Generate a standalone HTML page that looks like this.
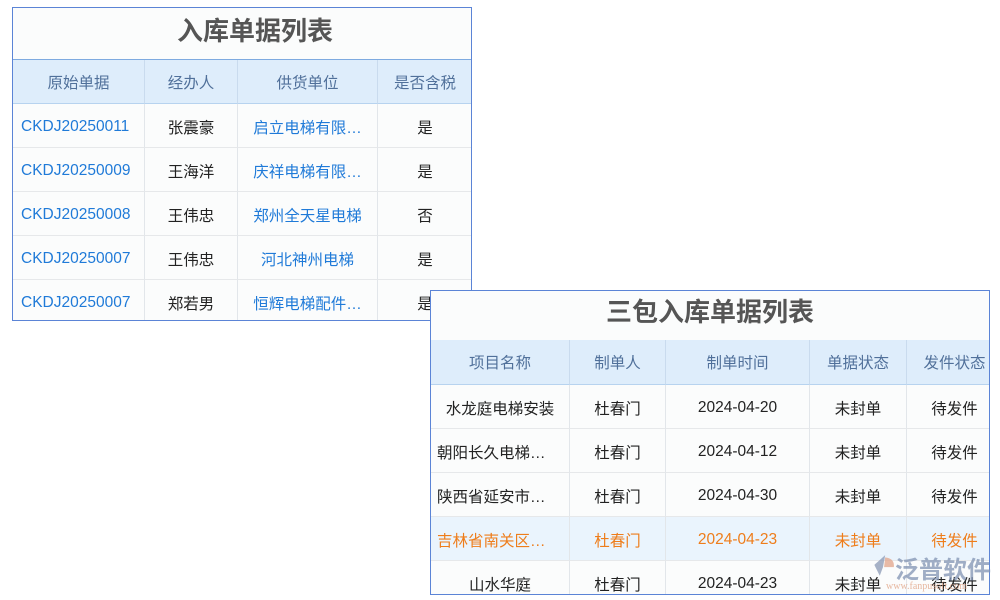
<!DOCTYPE html>
<html><head><meta charset="utf-8"><style>
body{margin:0;width:1000px;height:600px;background:#fff;position:relative;overflow:hidden;font-family:"Liberation Sans","Noto Sans CJK SC",sans-serif;}
.t{position:absolute;border:1px solid #5b84d6;background:#fbfcfc;overflow:hidden;box-sizing:border-box}
.title{position:absolute;left:0;right:0;top:0;text-align:center;font-weight:bold;color:#555;font-size:26px;background:#fbfcfc}
.c{position:absolute;box-sizing:border-box;display:flex;align-items:center;justify-content:center;font-size:15.5px;color:#222;white-space:nowrap;border-right:1px solid #e2e6ea;border-bottom:1px solid #e6e8ea;padding-top:2px}
.h{background:#deedfb;color:#50709a;border-right:1px solid #c9dbee;border-bottom:1px solid #b7d3ef;padding-top:0}
.b{color:#1f7ad8}
.o{color:#ee7d1b}
.hl{background:#eaf4fd}
</style></head><body>
<div class="t" style="left:12px;top:7px;width:460px;height:314px">
<div class="title" style="height:52px;line-height:46px;border-bottom:1px solid #7eaae0;padding-left:26px;box-sizing:border-box">入库单据列表</div>
<div class="c h" style="left:0;top:52px;width:132px;height:44px">原始单据</div>
<div class="c h" style="left:132px;top:52px;width:93px;height:44px">经办人</div>
<div class="c h" style="left:225px;top:52px;width:140px;height:44px">供货单位</div>
<div class="c h" style="left:365px;top:52px;width:95px;height:44px">是否含税</div>
<div class="c b" style="left:0;top:96px;width:132px;height:44px;justify-content:flex-start;padding-left:8px">CKDJ20250011</div>
<div class="c" style="left:132px;top:96px;width:93px;height:44px">张震豪</div>
<div class="c b" style="left:225px;top:96px;width:140px;height:44px">启立电梯有限…</div>
<div class="c" style="left:365px;top:96px;width:95px;height:44px">是</div>
<div class="c b" style="left:0;top:140px;width:132px;height:44px;justify-content:flex-start;padding-left:8px">CKDJ20250009</div>
<div class="c" style="left:132px;top:140px;width:93px;height:44px">王海洋</div>
<div class="c b" style="left:225px;top:140px;width:140px;height:44px">庆祥电梯有限…</div>
<div class="c" style="left:365px;top:140px;width:95px;height:44px">是</div>
<div class="c b" style="left:0;top:184px;width:132px;height:44px;justify-content:flex-start;padding-left:8px">CKDJ20250008</div>
<div class="c" style="left:132px;top:184px;width:93px;height:44px">王伟忠</div>
<div class="c b" style="left:225px;top:184px;width:140px;height:44px">郑州全天星电梯</div>
<div class="c" style="left:365px;top:184px;width:95px;height:44px">否</div>
<div class="c b" style="left:0;top:228px;width:132px;height:44px;justify-content:flex-start;padding-left:8px">CKDJ20250007</div>
<div class="c" style="left:132px;top:228px;width:93px;height:44px">王伟忠</div>
<div class="c b" style="left:225px;top:228px;width:140px;height:44px">河北神州电梯</div>
<div class="c" style="left:365px;top:228px;width:95px;height:44px">是</div>
<div class="c b" style="left:0;top:272px;width:132px;height:44px;justify-content:flex-start;padding-left:8px">CKDJ20250007</div>
<div class="c" style="left:132px;top:272px;width:93px;height:44px">郑若男</div>
<div class="c b" style="left:225px;top:272px;width:140px;height:44px">恒辉电梯配件…</div>
<div class="c" style="left:365px;top:272px;width:95px;height:44px">是</div>
</div>

<div class="t" style="left:430px;top:290px;width:560px;height:305px">
<div class="title" style="height:49px;line-height:42px;border-bottom:1px solid #7eaae0">三包入库单据列表</div>
<div class="c h" style="left:0;top:49px;width:139px;height:45px">项目名称</div>
<div class="c h" style="left:139px;top:49px;width:96px;height:45px">制单人</div>
<div class="c h" style="left:235px;top:49px;width:144px;height:45px">制单时间</div>
<div class="c h" style="left:379px;top:49px;width:97px;height:45px">单据状态</div>
<div class="c h" style="left:476px;top:49px;width:96px;height:45px">发件状态</div>

<div class="c" style="left:0;top:94px;width:139px;height:44px">水龙庭电梯安装</div>
<div class="c" style="left:139px;top:94px;width:96px;height:44px">杜春门</div>
<div class="c" style="left:235px;top:94px;width:144px;height:44px">2024-04-20</div>
<div class="c" style="left:379px;top:94px;width:97px;height:44px">未封单</div>
<div class="c" style="left:476px;top:94px;width:96px;height:44px">待发件</div>

<div class="c" style="left:0;top:138px;width:139px;height:44px;justify-content:flex-start;padding-left:6px">朝阳长久电梯…</div>
<div class="c" style="left:139px;top:138px;width:96px;height:44px">杜春门</div>
<div class="c" style="left:235px;top:138px;width:144px;height:44px">2024-04-12</div>
<div class="c" style="left:379px;top:138px;width:97px;height:44px">未封单</div>
<div class="c" style="left:476px;top:138px;width:96px;height:44px">待发件</div>

<div class="c" style="left:0;top:182px;width:139px;height:44px;justify-content:flex-start;padding-left:6px">陕西省延安市…</div>
<div class="c" style="left:139px;top:182px;width:96px;height:44px">杜春门</div>
<div class="c" style="left:235px;top:182px;width:144px;height:44px">2024-04-30</div>
<div class="c" style="left:379px;top:182px;width:97px;height:44px">未封单</div>
<div class="c" style="left:476px;top:182px;width:96px;height:44px">待发件</div>

<div class="c o hl" style="left:0;top:226px;width:139px;height:44px;justify-content:flex-start;padding-left:6px">吉林省南关区…</div>
<div class="c o hl" style="left:139px;top:226px;width:96px;height:44px">杜春门</div>
<div class="c o hl" style="left:235px;top:226px;width:144px;height:44px">2024-04-23</div>
<div class="c o hl" style="left:379px;top:226px;width:97px;height:44px">未封单</div>
<div class="c o hl" style="left:476px;top:226px;width:96px;height:44px">待发件</div>

<div class="c" style="left:0;top:270px;width:139px;height:44px">山水华庭</div>
<div class="c" style="left:139px;top:270px;width:96px;height:44px">杜春门</div>
<div class="c" style="left:235px;top:270px;width:144px;height:44px">2024-04-23</div>
<div class="c" style="left:379px;top:270px;width:97px;height:44px">未封单</div>
<div class="c" style="left:476px;top:270px;width:96px;height:44px">待发件</div>
</div>

<div style="position:absolute;left:868px;top:550px;width:130px;height:48px;opacity:0.75">
<svg width="26" height="24" style="position:absolute;left:2px;top:4px" viewBox="0 0 24 22"><path d="M14 1 L4 10 L9 20 L12 12 Z" fill="#8a99b5"/><path d="M14 3 Q23 4 22 12 L13 12 Z" fill="#e2a48a"/></svg>
<div style="position:absolute;left:27px;top:0;font-size:24px;color:#8193b3;font-weight:bold;letter-spacing:0px">泛普软件</div>
<div style="position:absolute;left:18px;top:31px;font-size:10px;color:#e0a080;font-family:'Liberation Serif',serif">www.fanpusoft.com</div>
</div>
</body></html>
